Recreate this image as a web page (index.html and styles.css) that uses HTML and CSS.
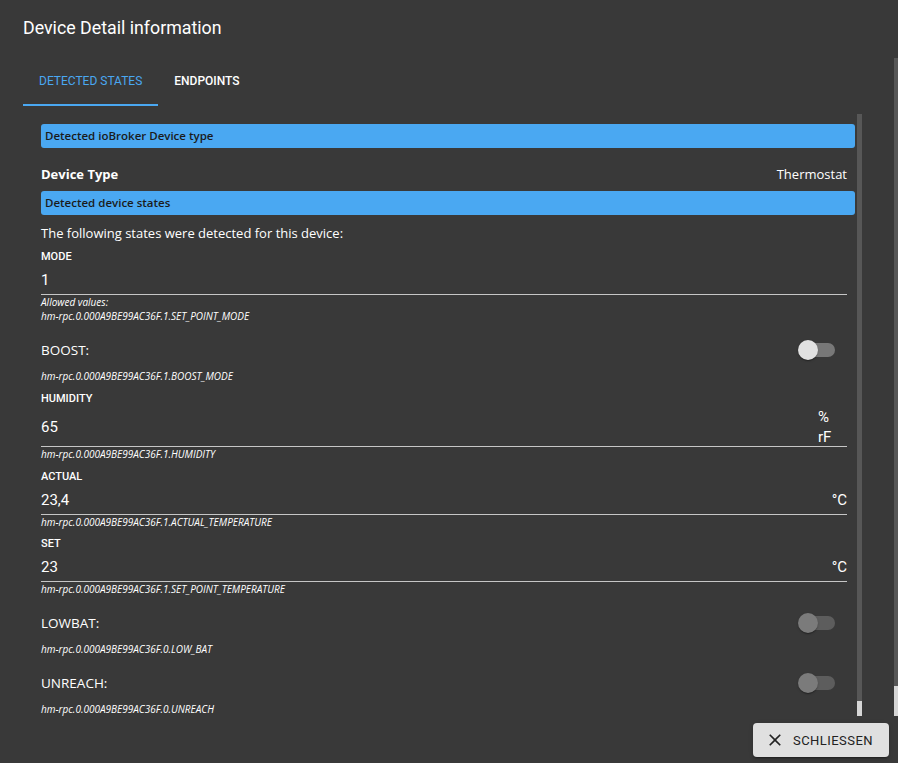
FILE: index.html
```html
<!DOCTYPE html>
<html>
<head>
<meta charset="utf-8">
<title>Device Detail information</title>
<link rel="stylesheet" href="styles.css">
</head>
<body>
<div class="dialog">
  <h2 class="title">Device Detail information</h2>
  <div class="content">
    <div class="content-main">
      <div class="tabs">
        <div class="tab active">Detected states</div>
        <div class="tab">Endpoints</div>
      </div>
      <div class="panel">
        <div class="panel-body">
          <div class="bar">Detected ioBroker Device type</div>
          <div class="type-row"><span class="type-label">Device Type</span><span class="type-value">Thermostat</span></div>
          <div class="bar bar2">Detected device states</div>
          <p class="intro">The following states were detected for this device:</p>

          <div class="field first">
            <div class="label">MODE</div>
            <div class="input"><span class="value">1</span></div>
            <div class="helper">Allowed values:</div>
            <div class="helper">hm-rpc.0.000A9BE99AC36F.1.SET_POINT_MODE</div>
          </div>

          <div class="toggle-row">
            <span class="toggle-label">BOOST:</span>
            <span class="switch"><span class="track"></span><span class="knob"></span></span>
          </div>
          <div class="helper">hm-rpc.0.000A9BE99AC36F.1.BOOST_MODE</div>

          <div class="field">
            <div class="label">HUMIDITY</div>
            <div class="input tall"><span class="value">65</span><span class="adorn narrow">% rF</span></div>
            <div class="helper">hm-rpc.0.000A9BE99AC36F.1.HUMIDITY</div>
          </div>

          <div class="field">
            <div class="label">ACTUAL</div>
            <div class="input"><span class="value">23,4</span><span class="adorn">°C</span></div>
            <div class="helper">hm-rpc.0.000A9BE99AC36F.1.ACTUAL_TEMPERATURE</div>
          </div>

          <div class="field tight">
            <div class="label">SET</div>
            <div class="input"><span class="value">23</span><span class="adorn">°C</span></div>
            <div class="helper">hm-rpc.0.000A9BE99AC36F.1.SET_POINT_TEMPERATURE</div>
          </div>

          <div class="toggle-row">
            <span class="toggle-label">LOWBAT:</span>
            <span class="switch disabled"><span class="track"></span><span class="knob"></span></span>
          </div>
          <div class="helper">hm-rpc.0.000A9BE99AC36F.0.LOW_BAT</div>

          <div class="toggle-row">
            <span class="toggle-label">UNREACH:</span>
            <span class="switch disabled"><span class="track"></span><span class="knob"></span></span>
          </div>
          <div class="helper">hm-rpc.0.000A9BE99AC36F.0.UNREACH</div>
        </div>
        <div class="scrollbar inner"><div class="thumb"></div></div>
      </div>
    </div>
    <div class="scrollbar outer"><div class="thumb"></div></div>
  </div>
  <div class="actions">
    <button class="close-btn">
      <svg class="close-icon" viewBox="0 0 24 24" width="20" height="20"><path d="M19 6.41L17.59 5 12 10.59 6.41 5 5 6.41 10.59 12 5 17.59 6.41 19 12 13.41 17.59 19 19 17.59 13.41 12z"/></svg>
      <span>Schliessen</span>
    </button>
  </div>
</div>
</body>
</html>
```

FILE: styles.css
```css
html, body {
  margin: 0;
  padding: 0;
  background: #393939;
}

body {
  font-family: Roboto, "Liberation Sans", sans-serif;
  color: #ffffff;
}

.dialog {
  width: 898px;
  height: 763px;
  display: flex;
  flex-direction: column;
  overflow: hidden;
}

.title {
  margin: 0;
  height: 58px;
  box-sizing: border-box;
  padding: 17px 0 0 23px;
  font-size: 17.8px;
  line-height: 22px;
  font-weight: 400;
  color: #ffffff;
  flex: 0 0 auto;
}

.content {
  flex: 0 0 658px;
  display: flex;
  min-height: 0;
}

.content-main {
  flex: 1;
  display: flex;
  flex-direction: column;
  min-width: 0;
  overflow: hidden;
}

.tabs {
  display: flex;
  padding-left: 23px;
  height: 48px;
  flex: 0 0 auto;
}

.tab {
  box-sizing: border-box;
  height: 48px;
  padding: 0 16px;
  display: flex;
  align-items: center;
  border-bottom: 2px solid transparent;
  font-size: 12px;
  font-weight: 500;
  text-transform: uppercase;
  color: #ffffff;
}

.tab.active {
  color: #4aa8f2;
  border-bottom-color: #4aa8f2;
  font-weight: 400;
}

.panel {
  flex: 1;
  display: flex;
  min-height: 0;
  margin: 8px 32px 0 23px;
}

.panel-body {
  flex: 1;
  min-width: 0;
  overflow: hidden;
  padding: 10px 0 0 18px;
}

.scrollbar {
  display: flex;
  flex-direction: column;
  justify-content: flex-end;
  background: #575757;
}

.scrollbar.inner {
  width: 5px;
  margin-left: 2px;
}

.scrollbar.inner .thumb {
  height: 15px;
  background: #d6d6d6;
}

.scrollbar.outer {
  width: 4px;
  flex: 0 0 4px;
}

.scrollbar.outer .thumb {
  height: 30px;
  background: #d6d6d6;
}

.bar {
  height: 24px;
  border-radius: 3px;
  background: #4aa8f2;
  padding-left: 4px;
  font-family: "Open Sans", "Noto Sans", sans-serif;
  font-size: 11.5px;
  font-weight: 600;
  line-height: 24px;
  color: #1b1b1b;
}

.bar2 {
  margin-top: 5px;
}

.type-row {
  margin-top: 14px;
  height: 24px;
  display: flex;
  justify-content: space-between;
  align-items: center;
  padding-right: 8px;
  font-family: "Open Sans", "Noto Sans", sans-serif;
  font-size: 13px;
}

.type-label {
  font-weight: 700;
}

.intro {
  margin: 9px 0 0;
  font-family: "Open Sans", "Noto Sans", sans-serif;
  font-size: 13px;
  line-height: 18px;
}

.field {
  margin-top: 7px;
}

.field.first,
.field.tight {
  margin-top: 6px;
}

.label {
  font-size: 11px;
  line-height: 14px;
  padding-top: 2px;
  font-weight: 500;
  color: #ffffff;
}

.input {
  margin: 1px 8px 0 0;
  height: 29px;
  display: flex;
  align-items: center;
  border-bottom: 1px solid #c6c6c6;
  font-size: 15px;
}

.input.tall {
  height: 39px;
}

.value {
  flex: 1;
}

.adorn {
  margin-left: 8px;
  line-height: 20px;
}

.adorn.narrow {
  width: 14px;
  margin-right: 15px;
}

.helper {
  font-family: "Open Sans", "Noto Sans", sans-serif;
  font-style: italic;
  font-size: 10px;
  line-height: 14px;
  color: #ffffff;
  white-space: nowrap;
}

.toggle-row {
  margin-top: 8px;
  height: 38px;
  display: flex;
  align-items: center;
  justify-content: space-between;
  padding-right: 8px;
}

.toggle-label {
  font-family: "Open Sans", "Noto Sans", sans-serif;
  font-size: 13.5px;
}

.switch {
  position: relative;
  width: 58px;
  height: 38px;
  flex: 0 0 58px;
}

.track {
  position: absolute;
  left: 12px;
  top: 12px;
  width: 34px;
  height: 14px;
  border-radius: 7px;
  background: #787878;
}

.knob {
  position: absolute;
  left: 9px;
  top: 9px;
  width: 20px;
  height: 20px;
  border-radius: 50%;
  background: #e1e1e1;
  box-shadow: 0 2px 1px -1px rgba(0,0,0,0.2), 0 1px 1px 0 rgba(0,0,0,0.14), 0 1px 3px 0 rgba(0,0,0,0.12);
}

.switch.disabled .track {
  background: #5d5d5d;
}

.switch.disabled .knob {
  background: #7b7b7b;
}

.actions {
  flex: 1;
  display: flex;
  justify-content: flex-end;
  align-items: flex-start;
  padding: 7px 9px 0 0;
}

.close-btn {
  height: 34px;
  display: flex;
  align-items: center;
  gap: 8px;
  padding: 0 16px 0 12px;
  border: none;
  border-radius: 4px;
  background: #e0e0e0;
  color: #222222;
  font-family: Roboto, "Liberation Sans", sans-serif;
  font-size: 13px;
  font-weight: 400;
  letter-spacing: 0.45px;
  text-transform: uppercase;
  box-shadow: 0 3px 1px -2px rgba(0,0,0,0.2), 0 2px 2px 0 rgba(0,0,0,0.14), 0 1px 5px 0 rgba(0,0,0,0.12);
}

.close-icon {
  fill: #222222;
  display: block;
}
```
